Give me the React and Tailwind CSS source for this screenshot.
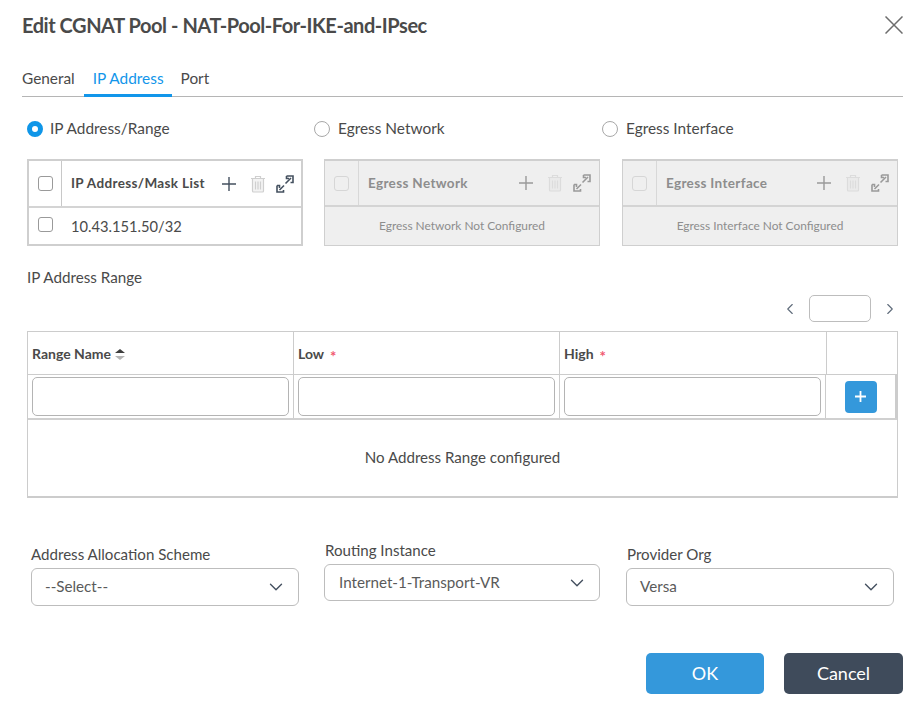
import { ChevronDown, ChevronLeft, ChevronRight } from "lucide-react"

function PlusIcon({ color }) {
    return (
        <svg width="16" height="16" viewBox="0 0 16 16" fill="none" stroke={color} strokeWidth="1.4">
            <path d="M8 1v14M1 8h14" />
        </svg>
    )
}

function TrashIcon({ color }) {
    return (
        <svg width="16" height="18" viewBox="0 0 16 18" fill="none" stroke={color} strokeWidth="1.2">
            <path d="M1 3.5h14M5.5 3.5V1.5h5v2" />
            <path d="M2.5 3.5v12.5a1 1 0 0 0 1 1h9a1 1 0 0 0 1-1V3.5z" fill={color} fillOpacity="0.25" />
            <path d="M5.5 6.5v8M8 6.5v8M10.500 6.500v8" />
        </svg>
    )
}

function ExpandIcon({ color }) {
    return (
        <svg width="18" height="18" viewBox="0 0 18 18" fill="none" stroke={color} strokeWidth="1.6">
            <path d="M10.500 1h6.500v6.500h-2.500" />
            <path d="M10.500 1v2.500h2.500" />
            <path d="M15 3L9.500 8.500" />
            <path d="M1 10.500v6.500h6.500v-2" />
            <path d="M3.500 15L8 10.500" />
            <path d="M1 10.500h2.500v2.500" />
        </svg>
    )
}

function Radio({ label, checked, className }) {
    return (
        <div className={`flex items-center ${className}`}>
            {checked ? (
                <span className="w-[16px] h-[16px] rounded-full border-[5px] border-[#0f96e8] bg-white" />
            ) : (
                <span className="w-[16px] h-[16px] rounded-full border border-[#a8a8a8] bg-white" />
            )}
            <span className="text-[15.4px] text-[#4a4a4a]">{label}</span>
        </div>
    )
}

function MiniTable({ title, disabled, children, className }) {
    const iconColor = disabled ? "#9a9a9a" : "#44505f"
    const trash = disabled ? "#dcdcdc" : "#cfcfcf"
    return (
        <div className={`w-[276px] border-2 border-[#cfcfcf] ${disabled ? "bg-[#efefef] border-b-[1px] border-x-[1px]" : "bg-white"} ${className}`}>
            <div className={`flex border-b-2 border-[#d4d4d4] ${disabled ? "h-[46px]" : "h-[47px]"}`}>
                <div className={`shrink-0 flex items-center justify-center border-r ${disabled ? "w-[34px] border-[#d8d8d8]" : "w-[33px] border-[#c8c8c8]"}`}>
                    <span className={`w-[15px] h-[15px] rounded-[3px] border ${disabled ? "border-[#d6d6d6]" : "border-[#9a9a9a]"}`} />
                </div>
                <div className={`flex-1 flex items-center pl-[9px] ${disabled ? "pr-[8px]" : "pr-[7px]"}`}>
                    <span className={`flex-1 text-[13.500px] font-bold tracking-[0.35px] whitespace-nowrap ${disabled ? "text-[#8d8d8d]" : "text-[#4a4a4a]"}`}>{title}</span>
                    <PlusIcon color={iconColor} />
                    <span className="ml-[13px]"><TrashIcon color={trash} /></span>
                    <span className="ml-[10px]"><ExpandIcon color={iconColor} /></span>
                </div>
            </div>
            {children}
        </div>
    )
}

function HeadCell({ label, required, sort, className }) {
    return (
        <div className={`flex items-center pl-[4px] border-r border-[#cccccc] ${className}`}>
            <span className="text-[14px] font-bold text-[#4a4a4a]">{label}</span>
            {sort && (
                <span className="ml-[4px] mt-[2px] flex flex-col gap-[3px]">
                    <span className="w-0 h-0 border-x-[5px] border-x-transparent border-b-[4px] border-b-[#3d3d3d]" />
                    <span className="w-0 h-0 border-x-[5px] border-x-transparent border-t-[4px] border-t-[#b5b5b5]" />
                </span>
            )}
            {required && <span className="ml-[6px] mt-[7px] text-[15px] leading-none font-bold text-[#f0576f]">*</span>}
        </div>
    )
}

function InputCell({ className }) {
    return (
        <div className={`flex items-center pl-[4px] border-r border-[#cccccc] ${className}`}>
            <div className="w-[257px] h-[39px] rounded-[5px] border border-[#b4b4b4] bg-white" />
        </div>
    )
}

function SelectField({ label, value, className, width, labelClass, valueClass }) {
    return (
        <div className={className}>
            <div className={`text-[15.100px] text-[#4a4a4a] leading-[18px] mb-[5px] ${labelClass}`}>{label}</div>
            <div className={`flex items-center justify-between rounded-[6px] border border-[#bdbdbd] pr-[11px] ${width}`}>
                <span className={`text-[15.200px] text-[#5a5a5a] pb-[1px] ${valueClass}`}>{value}</span>
                <ChevronDown size={22} color="#44505f" strokeWidth={1.5} />
            </div>
        </div>
    )
}

export default function App() {
    return (
        <div className="w-[916px] h-[704px] bg-white overflow-hidden font-['Lato',sans-serif]">
            {/* Titulo */}
            <div className="flex items-center justify-between h-[50px] pl-[22px] pr-[13px]">
                <h1 className="text-[20px] font-bold tracking-[-0.45px] text-[#4a4a4a]">Edit CGNAT Pool - NAT-Pool-For-IKE-and-IPsec</h1>
                <svg width="18" height="18" viewBox="0 0 18 18" fill="none" stroke="#6d6d6d" strokeWidth="1.5">
                    <path d="M0.500 0.500l17 17M17.500 0.500l-17 17" />
                </svg>
            </div>

            {/* Abas */}
            <div className="ml-[22px] mr-[13px] mt-[14px] flex h-[33px] border-b border-[#b5b5b5] text-[15.400px]">
                <span className="pt-[3px] text-[#4a4a4a]">General</span>
                <span className="ml-[9px] pl-[9px] pr-[8px] pt-[3px] h-[33px] border-b-[3px] border-[#1296ea] text-[#1296ea]">IP Address</span>
                <span className="ml-[9px] pt-[3px] text-[#4a4a4a]">Port</span>
            </div>

            {/* Radios */}
            <div className="flex mt-[21px] h-[22px] pl-[27px]">
                <Radio checked label="IP Address/Range" className="w-[287px] gap-[7px]" />
                <Radio label="Egress Network" className="w-[288px] gap-[8px]" />
                <Radio label="Egress Interface" className="gap-[8px]" />
            </div>

            {/* Listas */}
            <div className="flex items-start mt-[19px] pl-[27px]">
                <MiniTable title="IP Address/Mask List">
                    <div className="flex items-center h-[36px]">
                        <div className="w-[33px] flex justify-center pb-[4px]">
                            <span className="w-[15px] h-[15px] rounded-[3px] border border-[#9a9a9a]" />
                        </div>
                        <span className="pl-[9px] text-[14.700px] text-[#4a4a4a]">10.43.151.50/32</span>
                    </div>
                </MiniTable>
                <MiniTable disabled title="Egress Network" className="ml-[21px]">
                    <div className="flex items-center justify-center h-[38px] text-[11.900px] text-[#8d8d8d]">Egress Network Not Configured</div>
                </MiniTable>
                <MiniTable disabled title="Egress Interface" className="ml-[22px]">
                    <div className="flex items-center justify-center h-[38px] text-[11.900px] text-[#8d8d8d]">Egress Interface Not Configured</div>
                </MiniTable>
            </div>

            {/* Range */}
            <div className="ml-[27px] mt-[21px] text-[15.200px] leading-[20px] text-[#4a4a4a]">IP Address Range</div>
            <div className="flex items-center justify-end h-[27px] mt-[8px] pr-[17px]">
                <ChevronLeft size={18} color="#5f6b7a" strokeWidth={1.5} />
                <div className="mx-[10px] w-[62px] h-[27px] rounded-[5px] border border-[#bdbdbd]" />
                <ChevronRight size={18} color="#5f6b7a" strokeWidth={1.5} />
            </div>

            <div className="ml-[27px] mt-[9px] w-[871px] h-[167px] border border-[#cccccc] border-b-2">
                <div className="flex h-[43px] border-b border-[#cccccc]">
                    <HeadCell sort label="Range Name" className="w-[266px]" />
                    <HeadCell required label="Low" className="w-[266px]" />
                    <HeadCell required label="High" className="w-[267px]" />
                </div>
                <div className="flex h-[45px] border-b-2 border-[#d0d0d0]">
                    <InputCell className="w-[266px]" />
                    <InputCell className="w-[266px]" />
                    <InputCell className="w-[266px]" />
                    <div className="flex-1 flex items-center justify-center border-r-2 border-[#cccccc]">
                        <div className="w-[32px] h-[32px] rounded-[4px] bg-[#3498db] flex items-center justify-center">
                            <svg width="11" height="11" viewBox="0 0 11 11" fill="none" stroke="#ffffff" strokeWidth="1.800">
                                <path d="M5.500 0v11M0 5.500h11" />
                            </svg>
                        </div>
                    </div>
                </div>
                <div className="flex items-center justify-center h-[75px] text-[15.100px] text-[#4a4a4a]">No Address Range configured</div>
            </div>

            {/* Selects */}
            <div className="flex items-start mt-[47px]">
                <SelectField label="Address Allocation Scheme" value="--Select--" className="ml-[31px]" width="w-[268px] h-[38px]" valueClass="pl-[13px]" />
                <SelectField label="Routing Instance" value="Internet-1-Transport-VR" className="ml-[25px] -mt-[4px]" width="w-[276px] h-[37px]" labelClass="pl-[1px]" valueClass="pl-[14px]" />
                <SelectField label="Provider Org" value="Versa" className="ml-[26px]" width="w-[268px] h-[38px]" labelClass="pl-[1px]" valueClass="pl-[13px]" />
            </div>

            {/* Botoes */}
            <div className="flex justify-end gap-[20px] mt-[47px] pr-[13px]">
                <button className="w-[118px] h-[41px] pb-[1px] rounded-[5px] bg-[#3498db] text-white text-[18px]">OK</button>
                <button className="w-[119px] h-[41px] pb-[1px] rounded-[5px] bg-[#3f4b5b] text-white text-[18px]">Cancel</button>
            </div>
        </div>
    )
}
